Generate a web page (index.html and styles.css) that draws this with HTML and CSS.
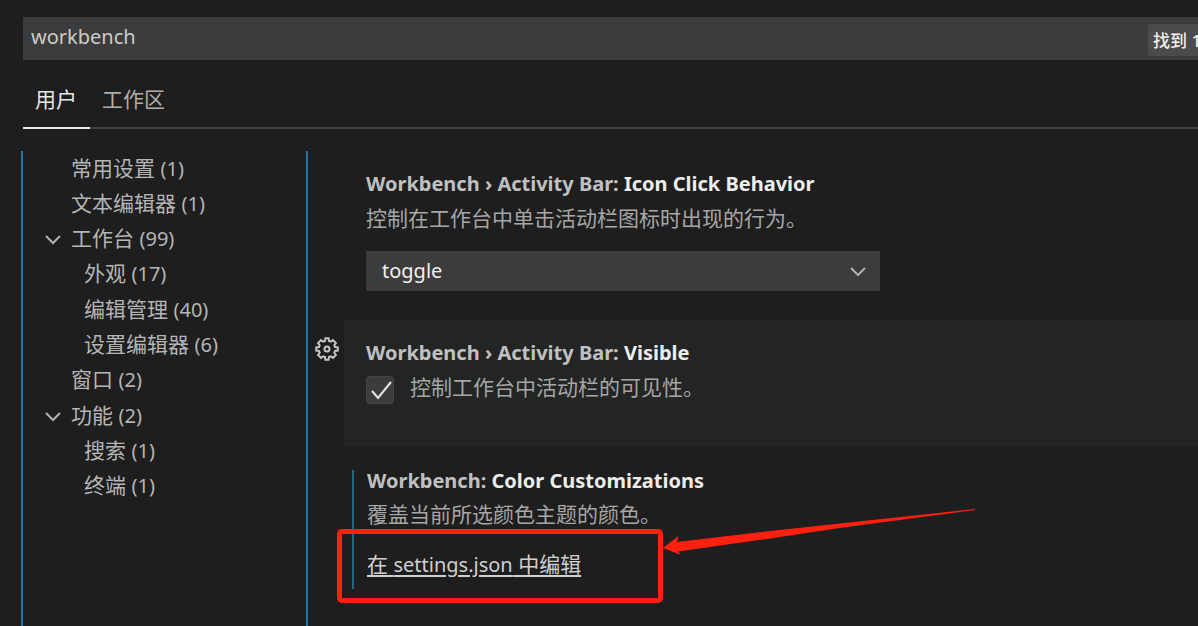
FILE: index.html
```html
<!DOCTYPE html>
<html lang="zh-CN">
<head>
<meta charset="utf-8">
<meta name="viewport" content="width=device-width, initial-scale=1">
<title>设置</title>
<link rel="stylesheet" href="styles.css">
</head>
<body>
<div class="settings">
  <div class="search">
    <input class="search-input" type="text" value="workbench" aria-label="搜索设置" spellcheck="false">
    <span class="search-count">找到 1</span>
  </div>
  <div class="tabs" role="tablist">
    <button class="tab tab-active" type="button" role="tab" aria-selected="true">用户</button>
    <button class="tab" type="button" role="tab" aria-selected="false">工作区</button>
  </div>
  <div class="body">
    <nav class="toc" aria-label="设置目录">
      <a class="toc-item" href="#common">常用设置 <span class="latin">(1)</span></a>
      <a class="toc-item" href="#editor">文本编辑器 <span class="latin">(1)</span></a>
      <a class="toc-item" href="#workbench"><svg class="chevron" viewBox="0 0 16 10" aria-hidden="true"><path d="M1 1l7 7 7-7"/></svg>工作台 <span class="latin">(99)</span></a>
      <a class="toc-item toc-child" href="#appearance">外观 <span class="latin">(17)</span></a>
      <a class="toc-item toc-child" href="#management">编辑管理 <span class="latin">(40)</span></a>
      <a class="toc-item toc-child" href="#settings-editor">设置编辑器 <span class="latin">(6)</span></a>
      <a class="toc-item" href="#window">窗口 <span class="latin">(2)</span></a>
      <a class="toc-item" href="#features"><svg class="chevron" viewBox="0 0 16 10" aria-hidden="true"><path d="M1 1l7 7 7-7"/></svg>功能 <span class="latin">(2)</span></a>
      <a class="toc-item toc-child" href="#search">搜索 <span class="latin">(1)</span></a>
      <a class="toc-item toc-child" href="#terminal">终端 <span class="latin">(1)</span></a>
    </nav>
    <main class="list">
      <section class="item item-first">
        <label class="title" for="click-behavior">Workbench › Activity Bar: <span class="name">Icon Click Behavior</span></label>
        <p class="desc">控制在工作台中单击活动栏图标时出现的行为。</p>
        <div class="select-wrap">
          <select class="select" id="click-behavior"><option>toggle</option></select>
          <svg class="chevron select-chevron" viewBox="0 0 16 10" aria-hidden="true"><path d="M1 1l7 7 7-7"/></svg>
        </div>
      </section>
      <div class="focus-row">
        <button class="gear" type="button" aria-label="更多操作">
          <svg class="gear-icon" viewBox="0 0 24 24" aria-hidden="true">
            <path d="M10 4L10.400 1.200H13.600L14 4L15.700 4.700L17.900 3L20.900 6L19.300 8.300L20 10L22.800 10.400V13.600L20 14L19.300 15.700L20.900 18L18 20.900L15.700 19.300L14 20L13.600 22.800H10.400L10 20L8.300 19.300L6 20.900L3.100 18L4.700 15.700L4 14L1.200 13.600V10.400L4 10L4.700 8.300L3.100 6L6 3.100L8.300 4.700Z"/>
            <circle cx="12" cy="12" r="2.500"/>
          </svg>
        </button>
        <section class="item item-focused">
          <h2 class="title">Workbench › Activity Bar: <span class="name">Visible</span></h2>
          <div class="check-row">
            <input class="check" type="checkbox" id="visible" checked>
            <label class="desc" for="visible">控制工作台中活动栏的可见性。</label>
            <svg class="check-mark" viewBox="0 0 28 28" aria-hidden="true"><path d="M6 15l6 7L25 6"/></svg>
          </div>
        </section>
      </div>
      <section class="item item-modified">
        <h2 class="title">Workbench: <span class="name">Color Customizations</span></h2>
        <p class="desc">覆盖当前所选颜色主题的颜色。</p>
        <a class="json-link" href="#settings-json">在 <span class="latin">settings.json</span> 中编辑</a>
        <div class="callout"></div>
        <svg class="arrow" viewBox="0 0 314 48" aria-hidden="true"><path d="M0 40L15.500 28L14 34L107 23L312 1V2L180 19.500L107 30.500L15 43.500L18 47Z"/></svg>
      </section>
    </main>
  </div>
</div>
</body>
</html>
```
FILE: styles.css
```css
* { box-sizing: border-box; }

body {
  margin: 0;
  background: #1e1e1e;
  color: #bdbdbd;
  font-family: "Noto Sans", "Noto Sans CJK SC", sans-serif;
  font-size: 21px;
}

.settings {
  display: flex;
  flex-direction: column;
  height: 100vh;
  padding: 17px 0 0 21px;
  overflow: hidden;
}

.search {
  display: flex;
  flex: none;
  align-items: center;
  height: 43px;
  margin-left: 2px;
  background: #3c3c3c;
}

.search-input {
  flex: 1;
  min-width: 0;
  height: 40px;
  padding: 0 8px 4px;
  border: 0;
  outline: 0;
  background: transparent;
  color: #cccccc;
  font: inherit;
  font-size: 20px;
}

.search-count {
  flex: none;
  width: 50px;
  height: 32px;
  margin-top: 3px;
  padding-left: 5px;
  overflow: hidden;
  border-radius: 3px 0 0 3px;
  background: #4b4b4b;
  color: #f0f0f0;
  font-size: 17px;
  font-weight: 500;
  line-height: 34px;
  white-space: nowrap;
}

.tabs {
  display: flex;
  flex: none;
  height: 69px;
  margin: 0 0 22px 2px;
  padding-top: 12px;
  border-bottom: 2px solid #3f3f3f;
}

.tab {
  margin-bottom: -2px;
  padding: 0 13px 4px 12px;
  border: 0;
  border-bottom: 2px solid transparent;
  background: none;
  color: #adadad;
  font: inherit;
}

.tab-active {
  border-color: #e7e7e7;
  color: #e7e7e7;
}

.body {
  display: flex;
  flex: 1;
  min-height: 0;
}

.toc {
  display: flex;
  flex: none;
  flex-direction: column;
  width: 287px;
  border: solid #2373a8;
  border-width: 0 2px;
}

.toc-item {
  position: relative;
  padding-left: 48px;
  color: #b5b5b5;
  line-height: 35px;
  text-decoration: none;
  white-space: nowrap;
}

/* Extra pixel between groups */
.toc-item:nth-child(5),
.toc-item:nth-child(8) { margin-top: 1px; }

.toc-child { padding-left: 61px; }

.latin { font-size: 20px; }

.chevron {
  position: absolute;
  top: 14px;
  left: 22px;
  width: 16px;
  height: 10px;
  fill: none;
  stroke: #b0b0b0;
  stroke-width: 2;
}

.list {
  flex: 1;
  min-width: 0;
}

.item {
  display: flex;
  flex-direction: column;
  align-items: flex-start;
}

.item-first { padding: 16px 24px 29px 58px; }

.title {
  margin: 0;
  color: #c0c0c0;
  font-size: 20px;
  font-weight: 700;
  line-height: 34px;
}

.name { color: #ededed; }

.desc {
  margin: 0;
  color: #a6a6a6;
  line-height: 35px;
}

.select-wrap {
  position: relative;
  width: 514px;
  max-width: 100%;
  margin-top: 15px;
}

.select {
  width: 100%;
  height: 40px;
  padding: 0 16px 2px;
  appearance: none;
  border: 0;
  border-radius: 0;
  background: #3c3c3c;
  color: #f0f0f0;
  font: inherit;
  font-size: 20px;
}

.select-chevron {
  top: 16px;
  right: 14px;
  left: auto;
  pointer-events: none;
}

.focus-row {
  display: flex;
  align-items: flex-start;
}

.gear {
  flex: none;
  width: 36px;
  height: 24px;
  margin-top: 17px;
  padding: 0 0 0 7px;
  border: 0;
  background: none;
}

.gear-icon {
  display: block;
  width: 24px;
  height: 24px;
  fill: none;
  stroke: #c5c5c5;
  stroke-width: 2;
}

.item-focused {
  flex: 1;
  min-width: 0;
  height: 127px;
  padding: 16px 24px 0 22px;
  background: #232524;
}

.check-row {
  position: relative;
  display: flex;
  gap: 16px;
}

.check {
  width: 28px;
  height: 28px;
  margin: 6px 0 0;
  appearance: none;
  border: 1px solid #444444;
  border-radius: 4px;
  background: #3c3c3c;
}

.check-mark {
  position: absolute;
  top: 6px;
  left: 0;
  width: 28px;
  height: 28px;
  fill: none;
  stroke: #e8e8e8;
  stroke-width: 2;
  pointer-events: none;
}

.item-modified {
  position: relative;
  margin: 23px 0 0 44px;
  padding: 0 0 6px 13px;
  border-left: 2px solid #1f6a80;
}

.item-modified .title { line-height: 22px; }

.item-modified .desc { margin-top: 5px; }

.json-link {
  margin-top: 14px;
  color: #d0d0d0;
  line-height: 36px;
  text-decoration-thickness: 2px;
  text-underline-offset: 3px;
}

.callout {
  position: absolute;
  top: 59px;
  left: -17px;
  width: 326px;
  height: 74px;
  border: 5px solid #ff2010;
  border-radius: 5px;
}

.arrow {
  position: absolute;
  top: 38px;
  left: 309px;
  width: 314px;
  height: 48px;
  fill: #ff2010;
}
```
